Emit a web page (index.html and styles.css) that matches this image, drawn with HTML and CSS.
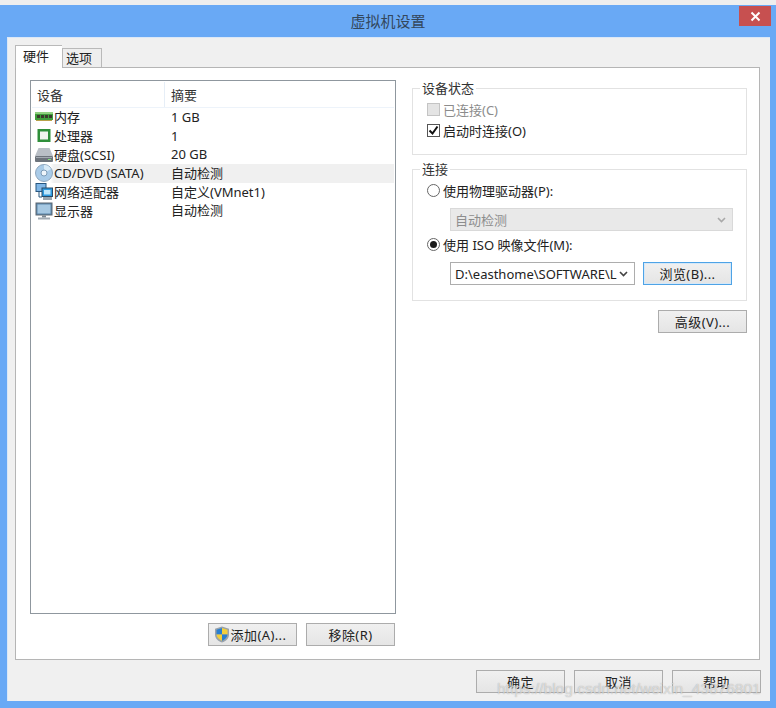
FILE: index.html
```html
<!DOCTYPE html>
<html lang="zh-CN">
<head>
    <meta charset="UTF-8">
    <title>虚拟机设置</title>
    <link rel="stylesheet" href="styles.css">
</head>
<body>

<div class="top-strip"></div>
<div class="titlebar">
    <div class="title">虚拟机设置</div>
    <div class="close">
        <svg width="11" height="11" viewBox="0 0 11 11"><path d="M1.5 1.5l8 8M9.5 1.5l-8 8" stroke="#fff" stroke-width="2"/></svg>
    </div>
</div>

<div class="client">
    <div class="tabs">
        <div class="tab active">硬件</div>
        <div class="tab">选项</div>
    </div>

    <div class="panel">
        <div class="left">
            <div class="list">
                <div class="list-head">
                    <div class="col-device">设备</div>
                    <div class="col-summary">摘要</div>
                </div>
                <div class="row">
                    <div class="col-device">
                        <svg class="icon" width="18" height="18" viewBox="0 0 18 18"><rect x="0" y="4" width="18" height="8" fill="#3f9d3c"/><rect x="0" y="4" width="18" height="2" fill="#8fd07f"/><path d="M2 7h3v3H2zM6 7h3v3H6zM10 7h3v3h-3zM14 7h3v3h-3z" fill="#3a3a2c"/><rect x="1" y="12" width="16" height="1" fill="#b8a24a"/></svg>
                        内存
                    </div>
                    <div class="col-summary">1 GB</div>
                </div>
                <div class="row">
                    <div class="col-device">
                        <svg class="icon" width="18" height="18" viewBox="0 0 18 18"><rect x="2.500" y="2" width="13" height="13" fill="#2f8f3a"/><rect x="5" y="4.500" width="8" height="8" fill="#f2f4ee"/></svg>
                        处理器
                    </div>
                    <div class="col-summary">1</div>
                </div>
                <div class="row">
                    <div class="col-device">
                        <svg class="icon" width="18" height="18" viewBox="0 0 18 18"><path d="M3.5 2h11L18 10H0z" fill="#b9bfc6"/><rect x="0" y="10" width="18" height="6" rx="1" fill="#6d747c"/><rect x="1" y="11" width="16" height="1" fill="#a4abb3"/><rect x="13" y="13" width="3" height="1" fill="#7fe07a"/></svg>
                        硬盘(SCSI)
                    </div>
                    <div class="col-summary">20 GB</div>
                </div>
                <div class="row selected">
                    <div class="col-device">
                        <svg class="icon" width="18" height="18" viewBox="0 0 18 18"><circle cx="9" cy="9" r="8.5" fill="#a9cbe8"/><circle cx="9" cy="9" r="8.5" fill="none" stroke="#8ea6bd"/><path d="M9 1a8 8 0 0 1 7 4l-7 4z" fill="#d9ebf8"/><circle cx="9" cy="9" r="3" fill="#eef5fb" stroke="#7d9cb8"/></svg>
                        CD/DVD (SATA)
                    </div>
                    <div class="col-summary">自动检测</div>
                </div>
                <div class="row">
                    <div class="col-device">
                        <svg class="icon" width="18" height="18" viewBox="0 0 18 18"><rect x="1" y="0.5" width="10" height="8" fill="#7fb6e6" stroke="#27567f"/><path d="M4 9v5h3" fill="none" stroke="#27567f"/><rect x="7" y="5" width="10.5" height="8.5" fill="#2e9be0" stroke="#2a4a66"/><rect x="9" y="7" width="6.5" height="4.5" fill="#bfe6fa"/><rect x="8" y="14" width="9" height="3" fill="#9aa5ae"/></svg>
                        网络适配器
                    </div>
                    <div class="col-summary">自定义(VMnet1)</div>
                </div>
                <div class="row">
                    <div class="col-device">
                        <svg class="icon" width="18" height="18" viewBox="0 0 18 18"><rect x="1" y="1" width="16" height="12" fill="#5b87ab" stroke="#5c6670"/><rect x="2.5" y="2.5" width="13" height="9" fill="#a6c8e2"/><rect x="7" y="13.5" width="4" height="2" fill="#7c8791"/><rect x="3" y="15.5" width="12" height="2" fill="#a2abb3"/></svg>
                        显示器
                    </div>
                    <div class="col-summary">自动检测</div>
                </div>
            </div>
            <div class="list-buttons">
                <div class="btn">
                    <svg class="shield" width="16" height="17" viewBox="0 0 16 17"><path d="M8 .5l7 2.3v5.7c0 4-3 6.7-7 8-4-1.300-7-4-7-8V2.800z" fill="#9aa3ab"/><path d="M8 2v6.500H2.500V3.700z" fill="#2a7fd0"/><path d="M8 2l5.500 1.700v4.800H8z" fill="#f3cf3c"/><path d="M8 8.500h5.500c-.2 3-2.700 5.100-5.500 6.200z" fill="#2a7fd0"/><path d="M2.500 8.500H8v6.200c-2.800-1.100-5.300-3.200-5.500-6.200z" fill="#f3cf3c"/></svg>
                    添加(A)...
                </div>
                <div class="btn">移除(R)</div>
            </div>
        </div>

        <div class="right">
            <fieldset class="group status">
                <legend>设备状态</legend>
                <div class="option disabled"><span class="check"></span>已连接(C)</div>
                <div class="option">
                    <span class="check">
                        <svg width="11" height="11" viewBox="0 0 11 11"><path d="M1.500 5.500l3 3 5-7" fill="none" stroke="#111" stroke-width="2"/></svg>
                    </span>启动时连接(O)
                </div>
            </fieldset>

            <fieldset class="group connect">
                <legend>连接</legend>
                <div class="option"><span class="radio"></span>使用物理驱动器(P):</div>
                <div class="field">
                    <div class="select select-off">
                        <span>自动检测</span>
                        <svg width="9" height="6" viewBox="0 0 9 6"><path d="M1 1l3.500 3.500L8 1" fill="none" stroke="#a9a9a9" stroke-width="1.600"/></svg>
                    </div>
                </div>
                <div class="option"><span class="radio on"></span>使用 ISO 映像文件(M):</div>
                <div class="field">
                    <div class="select select-iso">
                        <span>D:\easthome\SOFTWARE\L</span>
                        <svg width="9" height="6" viewBox="0 0 9 6"><path d="M1 1l3.500 3.500L8 1" fill="none" stroke="#444" stroke-width="1.600"/></svg>
                    </div>
                    <div class="btn btn-focus">浏览(B)...</div>
                </div>
            </fieldset>

            <div class="advanced">
                <div class="btn">高级(V)...</div>
            </div>
        </div>
    </div>

    <div class="footer">
        <div class="btn">确定</div>
        <div class="btn">取消</div>
        <div class="btn">帮助</div>
    </div>
</div>

<div class="watermark">https://blog.csdn.net/weixin_43876801</div>

</body>
</html>
```

FILE: styles.css
```css
body {
    font-family: "Noto Sans", "Noto Sans CJK SC", sans-serif;
    font-size: 13px;
    color: #222;
    width: 776px;
    height: 708px;
    margin: 0;
    background: #69a9f5;
    position: relative;
    overflow: hidden;
}
.top-strip {
    height: 5px;
    background: #eeeeee;
}
.titlebar {
    height: 32px;
    display: flex;
    justify-content: center;
    position: relative;
}
.title {
    font-size: 15px;
    line-height: 33px;
    color: #33475c;
}
.close {
    position: absolute;
    top: 1px;
    right: 5px;
    width: 32px;
    height: 20px;
    background: #c75050;
    display: flex;
    align-items: center;
    justify-content: center;
}
.client {
    height: 664px;
    margin: 0 6px 0 7px;
    box-sizing: border-box;
    padding: 7px 9px 0 7px;
    background: #f0f0f0;
    border-top: 1px solid #dbe8f7;
    border-left: 1px solid #dbe8f7;
}
.tabs {
    display: flex;
    align-items: flex-end;
    height: 22px;
    position: relative;
    z-index: 1;
}
.tab {
    width: 40px;
    height: 19px;
    line-height: 18px;
    text-align: center;
    padding-right: 6px;
    background: #eeeeee;
    border: 1px solid #b9b9b9;
    border-bottom: none;
    box-sizing: border-box;
}
.tab.active {
    width: 47px;
    height: 23px;
    line-height: 20px;
    margin-bottom: -1px;
    background: #fff;
    border-right: none;
}
.panel {
    height: 593px;
    box-sizing: border-box;
    margin-right: 1px;
    border: 1px solid #b5b5b5;
    background: #fff;
    padding: 12px 12px 0 14px;
    display: flex;
    gap: 16px;
}
.left {
    width: 366px;
}
.list {
    height: 534px;
    box-sizing: border-box;
    border: 1px solid #8f979e;
    padding: 1px;
}
.list-head {
    display: flex;
    height: 25px;
    line-height: 26px;
    color: #333;
    border-bottom: 1px solid #edf3fa;
}
.list-head .col-device {
    border-right: 1px solid #e6eef7;
    padding-left: 5px;
}
.row {
    display: flex;
    height: 18.700px;
    line-height: 18px;
    white-space: nowrap;
}
.col-device {
    width: 133px;
    box-sizing: border-box;
    display: flex;
    align-items: center;
    gap: 1px;
    padding-left: 3px;
}
.col-summary {
    flex: 1;
    padding-left: 6px;
}
.row.selected {
    background: linear-gradient(90deg, #fff 18px, #f0f0f0 22px);
}
.icon {
    flex: none;
}
.list-buttons {
    display: flex;
    justify-content: flex-end;
    gap: 9px;
    margin-top: 9px;
    padding-right: 1px;
}
.btn {
    width: 89px;
    height: 23px;
    box-sizing: border-box;
    border: 1px solid #acacac;
    background: linear-gradient(#f0f0f0, #e5e5e5);
    display: flex;
    align-items: center;
    justify-content: center;
    gap: 1px;
    letter-spacing: 0.4px;
    white-space: nowrap;
}
.btn-focus {
    border-color: #4ea3e6;
    box-shadow: inset 0 0 0 1px #d5e8f8;
}
.shield {
    margin-left: -5px;
}
.right {
    width: 335px;
}
.group {
    margin: 0;
    padding: 0 0 0 14px;
    min-width: 0;
    border: 1px solid #e2e2e2;
}
.group legend {
    margin-left: -7px;
    padding: 0 2px;
    line-height: 16px;
    color: #333;
}
.status {
    height: 75px;
    box-sizing: border-box;
    padding-top: 3px;
}
.connect {
    height: 140px;
    box-sizing: border-box;
    margin-top: 6px;
    padding-top: 3px;
}
.option {
    height: 21px;
    display: flex;
    align-items: center;
    gap: 3px;
}
.option.disabled {
    color: #8c8c8c;
}
.check {
    width: 13px;
    height: 13px;
    box-sizing: border-box;
    border: 1px solid #555;
    background: #fff;
    display: flex;
    align-items: center;
    justify-content: center;
}
.disabled .check {
    border-color: #c4c4c4;
    background: #e4e4e4;
}
.radio {
    width: 13px;
    height: 13px;
    box-sizing: border-box;
    border: 1px solid #666;
    border-radius: 50%;
    background: #fff;
    display: flex;
    align-items: center;
    justify-content: center;
}
.radio.on::after {
    content: "";
    width: 7px;
    height: 7px;
    border-radius: 50%;
    background: #1a1a1a;
}
.field {
    display: flex;
    gap: 8px;
    margin: 7px 0 3px 23px;
}
.select {
    height: 23px;
    box-sizing: border-box;
    border: 1px solid #adadad;
    background: #fff;
    display: flex;
    align-items: center;
    justify-content: space-between;
    padding: 0 6px 0 4px;
    white-space: nowrap;
}
.select-off {
    width: 283px;
    background: #e9e9e9;
    border-color: #d9d9d9;
    color: #8d8d8d;
}
.select-iso {
    width: 185px;
}
.advanced {
    display: flex;
    justify-content: flex-end;
    margin-top: 9px;
}
.footer {
    display: flex;
    justify-content: flex-end;
    gap: 9px;
    margin-top: 10px;
}
.watermark {
    position: absolute;
    left: 497px;
    top: 678px;
    font-family: "Liberation Sans", sans-serif;
    font-size: 15.500px;
    line-height: 22px;
    color: rgba(255, 255, 255, 0.55);
    text-shadow: 0 0 1px rgba(110, 110, 110, 0.6);
    white-space: nowrap;
}
```
